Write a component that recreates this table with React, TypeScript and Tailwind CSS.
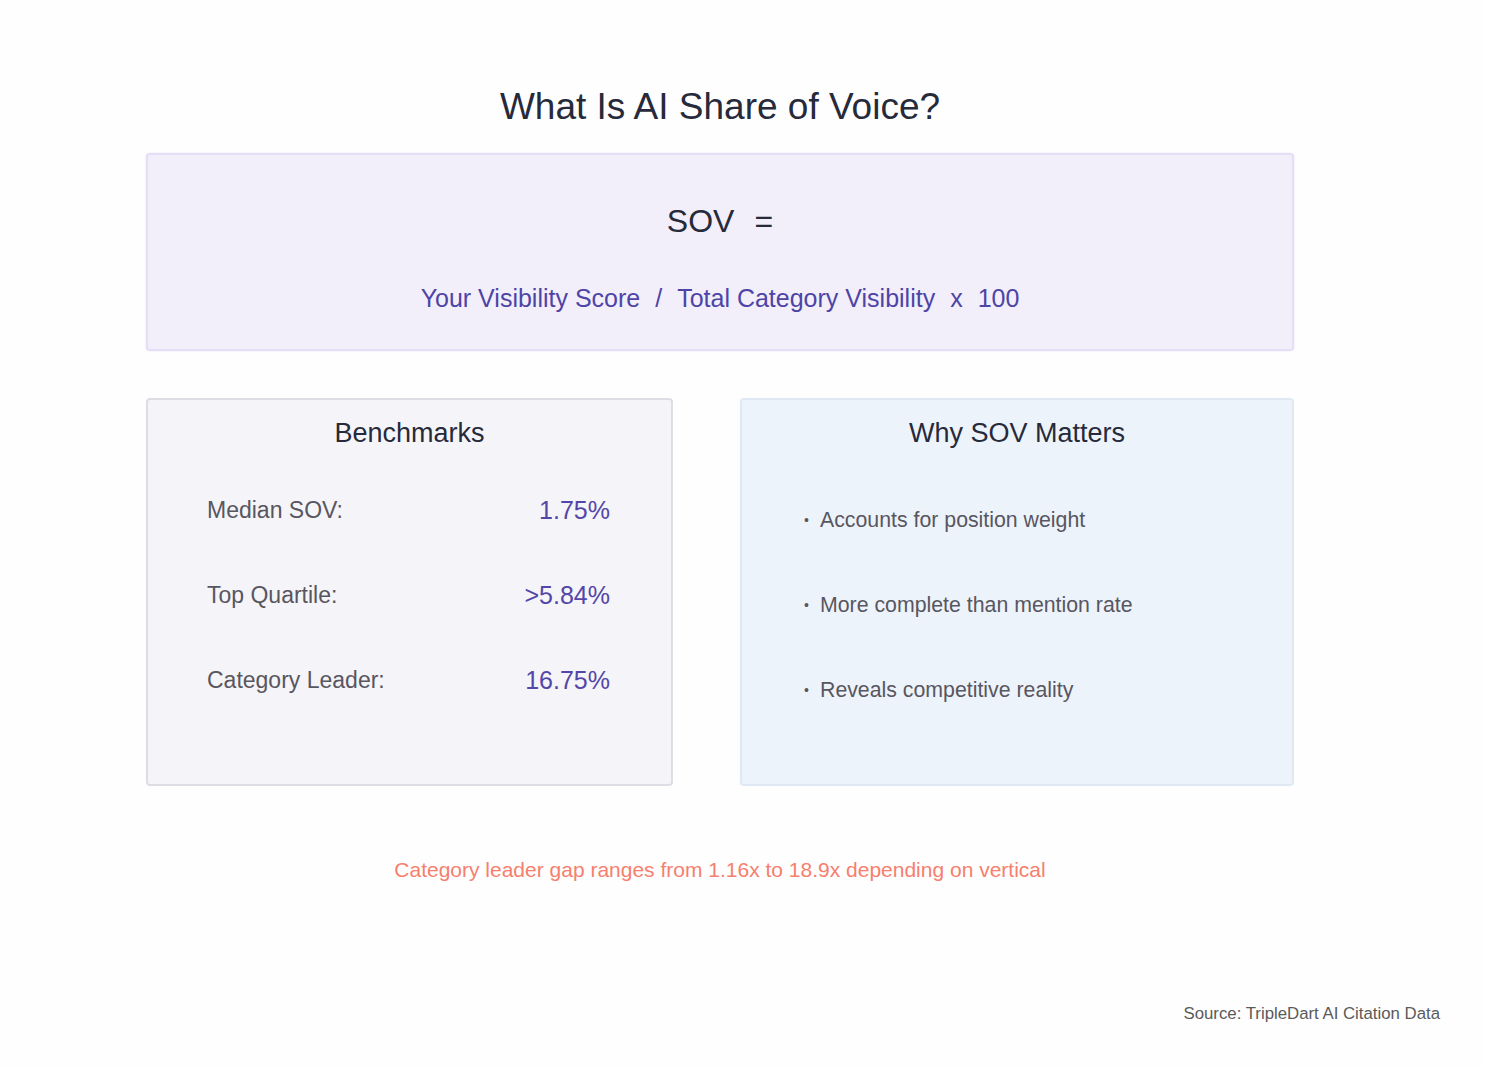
import React from "react";

const benchmarks = [
  { label: "Median SOV:", value: "1.75%" },
  { label: "Top Quartile:", value: ">5.84%" },
  { label: "Category Leader:", value: "16.75%" },
];

const reasons = [
  "Accounts for position weight",
  "More complete than mention rate",
  "Reveals competitive reality",
];

export default function App() {
  return (
    <div className="w-[1485px] h-[1066px] bg-[#fefefe] font-['Liberation_Sans',Arial,sans-serif] flex flex-col">
      <div className="ml-[146px] w-[1148px] flex flex-col">
        <h1 className="mt-[89px] text-center text-[37px] leading-[36px] text-[#262a3a] font-normal">
          What Is AI Share of Voice?
        </h1>

        <div className="mt-[28px] h-[198px] rounded-[4px] border-2 border-[#e4def6] bg-[#f2effa] shadow-[0_0_2px_rgba(180,170,230,0.35)] flex flex-col items-center pt-[50px]">
          <div className="flex items-center gap-[20px] text-[32px] leading-[32px] text-[#262a3a]">
            <span>SOV</span>
            <span>=</span>
          </div>
          <div className="mt-[49px] flex items-center gap-[15px] text-[25px] leading-[24px] text-[#4e44a6]">
            <span>Your Visibility Score</span>
            <span>/</span>
            <span>Total Category Visibility</span>
            <span>x</span>
            <span>100</span>
          </div>
        </div>

        <div className="mt-[47px] flex gap-[67px]">
          <div className="w-[527px] h-[388px] rounded-[4px] border-2 border-[#dfdde3] bg-[#f5f4f9] flex flex-col pt-[20px]">
            <div className="text-center text-[27px] leading-[26px] text-[#262a3a]">Benchmarks</div>
            <div className="mt-[22px] flex flex-col pl-[59px] pr-[61px]">
              {benchmarks.map((b) => (
                <div key={b.label} className="h-[85px] flex items-center justify-between">
                  <span className="text-[23px] text-[#58565f]">{b.label}</span>
                  <span className="text-[25px] text-[#5446a8]">{b.value}</span>
                </div>
              ))}
            </div>
          </div>

          <div className="w-[554px] h-[388px] rounded-[4px] border-2 border-[#dfe8f3] bg-[#edf3fa] flex flex-col pt-[20px]">
            <div className="text-center text-[27px] leading-[26px] text-[#262a3a]">Why SOV Matters</div>
            <div className="mt-[32px] flex flex-col pl-[62px]">
              {reasons.map((r) => (
                <div key={r} className="h-[85px] flex items-center">
                  <span className="w-[16px] text-[14px] text-[#58565f]">•</span>
                  <span className="text-[21.3px] text-[#58565f]">{r}</span>
                </div>
              ))}
            </div>
          </div>
        </div>

        <div className="mt-[74px] text-center text-[21px] leading-[20px] text-[#f77f6e]">
          Category leader gap ranges from 1.16x to 18.9x depending on vertical
        </div>
      </div>

      <div className="mt-[126px] w-[1440px] text-right text-[16.8px] leading-[16px] text-[#5a5a5a]">
        Source: TripleDart AI Citation Data
      </div>
    </div>
  );
}
